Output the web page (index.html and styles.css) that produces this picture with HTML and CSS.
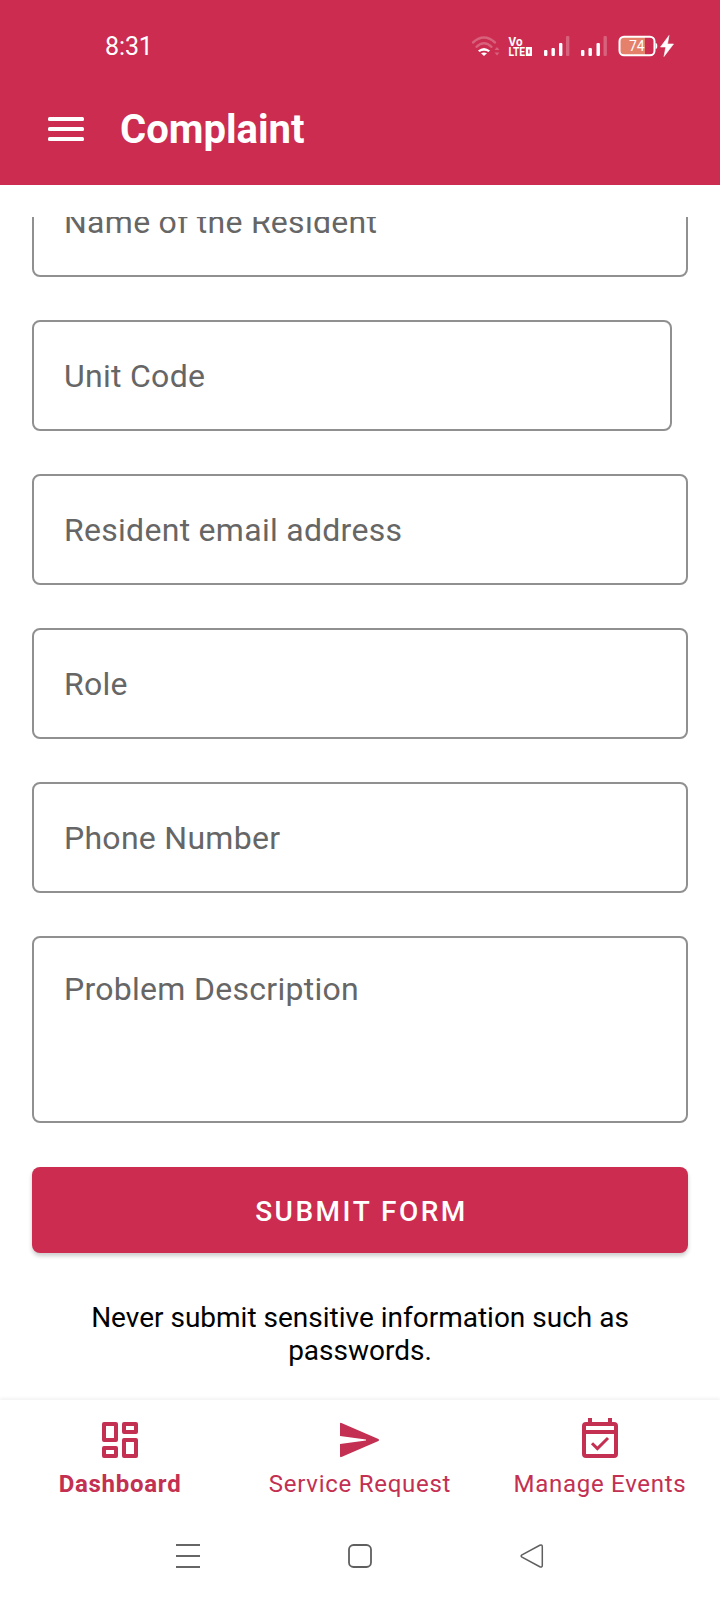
FILE: index.html
```
<!DOCTYPE html>
<html lang="en">
<head>
<meta charset="utf-8">
<title>Complaint</title>
<link rel="stylesheet" href="styles.css">
</head>
<body>
<div class="screen">
  <header class="header">
    <div class="status">
      <span class="clock">8:31</span>
      <svg class="status-icons" width="216" height="30" viewBox="470 30 216 30">
        <g fill="none" stroke="#fff" stroke-width="2.4" stroke-linecap="round">
          <path d="M473 42.5Q484 32.5 495 42.5" opacity=".25"/>
          <path d="M476.500 46.800Q484 39.800 491.500 46.800" opacity=".25"/>
        </g>
        <path d="M478 50.500Q484 45.500 490 50.500L488.500 52Q484 49.300 479.500 52z" fill="#fff"/>
        <path d="M481 53.300Q484 51.800 487 53.300L484 56z" fill="#fff"/>
        <path d="M494.500 50l2.500-3 2.500 3zM494.500 52.500l2.500 3 2.500-3z" fill="#fff" opacity=".25"/>
        <g class="volte" fill="#fff">
          <text x="508.500" y="45.500" textLength="14" lengthAdjust="spacingAndGlyphs">Vo</text>
          <text x="508.500" y="56" textLength="16.500" lengthAdjust="spacingAndGlyphs">LTE</text>
        </g>
        <path d="M527 48.200h3.800v6.600H527z" fill="none" stroke="#fff" stroke-width="2.400"/>
        <g fill="#fff">
          <rect x="544" y="50" width="3.400" height="6" rx="1"/>
          <rect x="551.500" y="48" width="3.400" height="8" rx="1"/>
          <rect x="559" y="43" width="3.400" height="13" rx="1"/>
          <rect x="566" y="36" width="3.400" height="20" rx="1" opacity=".25"/>
          <rect x="581" y="50" width="3.400" height="6" rx="1"/>
          <rect x="588.500" y="48" width="3.400" height="8" rx="1"/>
          <rect x="596.500" y="43" width="3.400" height="13" rx="1"/>
          <rect x="603.500" y="36" width="3.400" height="20" rx="1" opacity=".25"/>
        </g>
        <path d="M623 37h22v18h-22q-3 0-3-3V40q0-3 3-3z" fill="#e5806a"/>
        <rect x="619.500" y="36.700" width="35" height="18.600" rx="4.500" fill="none" stroke="#fff" stroke-width="2"/>
        <path d="M655.500 43q1.800 0 1.800 3t-1.800 3z" fill="#fff"/>
        <text class="battery" x="629" y="51" fill="#fff">74</text>
        <path d="M669 35.500l-8.500 11.500h5.300l-1.800 9.500 9.500-12.500h-6z" fill="#fff" stroke="#fff" stroke-width=".6"/>
      </svg>
    </div>
    <div class="toolbar">
      <svg width="36" height="26" viewBox="0 0 36 26" fill="#fff">
        <rect y="1" width="36" height="4" rx="1.500"/>
        <rect y="11" width="36" height="4" rx="1.500"/>
        <rect y="21" width="36" height="4" rx="1.500"/>
      </svg>
      <h1 class="title">Complaint</h1>
    </div>
  </header>

  <main class="content">
    <form class="form">
      <div class="field field-scrolled">Name of the Resident</div>
      <div class="field field-unit">Unit Code</div>
      <div class="field">Resident email address</div>
      <div class="field">Role</div>
      <div class="field">Phone Number</div>
      <div class="field field-area">Problem Description</div>
      <button class="submit" type="button">SUBMIT FORM</button>
    </form>
    <p class="note">Never submit sensitive information such as passwords.</p>
  </main>

  <nav class="tabs">
    <a class="tab tab-active">
      <svg width="48" height="48" viewBox="0 0 24 24" fill="none" stroke="currentColor" stroke-width="2" stroke-linejoin="round">
        <path d="M4 4h6v8H4zM14 4h6v4h-6zM14 12h6v8h-6zM4 16h6v4H4z"/>
      </svg>
      <span>Dashboard</span>
    </a>
    <a class="tab">
      <svg width="48" height="48" viewBox="0 0 24 24" fill="currentColor">
        <path d="M2 4Q2 3.200 2.700 3.500L21.200 11.500Q22 12 21.200 12.500L2.700 20.500Q2 20.800 2 20V14L15 12.200V11.800L2 10z"/>
      </svg>
      <span>Service Request</span>
    </a>
    <a class="tab">
      <svg width="48" height="48" viewBox="0 0 24 24" fill="none" stroke="currentColor" stroke-width="2">
        <rect x="4" y="4" width="16" height="16" rx="1"/>
        <path d="M7 1v3M17 1v3M4 8h16"/>
        <path d="M8 13.600l2.700 2.700 5.300-5.300" stroke-width="1.500"/>
      </svg>
      <span>Manage Events</span>
    </a>
  </nav>

  <div class="system">
    <svg width="24" height="24" viewBox="0 0 24 24" stroke="#666" stroke-width="2"><path d="M0 1h24M0 12h24M0 23h24"/></svg>
    <svg width="24" height="24" viewBox="0 0 24 24" fill="none" stroke="#5f5f5f" stroke-width="1.800"><rect x="1" y="1" width="22" height="22" rx="4.500"/></svg>
    <svg width="24" height="24" viewBox="0 0 24 24" fill="none" stroke="#5f5f5f" stroke-width="1.500"><path d="M2 10.800L19.800 1.300Q22.300 .3 22.300 2.800V21.200Q22.300 23.700 19.800 22.700L2 13.200Q.3 12 2 10.800z"/></svg>
  </div>
</div>
</body>
</html>
```
FILE: styles.css
```
* { box-sizing: border-box; }

body {
  margin: 0;
  background: #fff;
  font-family: Roboto, "Liberation Sans", sans-serif;
}

.screen {
  width: 720px;
  height: 1600px;
  display: flex;
  flex-direction: column;
  overflow: hidden;
}

.header {
  flex: none;
  height: 185px;
  background: #cb2c50;
  color: #fff;
}

.status {
  height: 73px;
  padding: 30px 34px 0 105px;
  display: flex;
  justify-content: space-between;
}

.clock {
  font-size: 25px;
  line-height: 33px;
  letter-spacing: -0.1px;
}

.volte {
  font-size: 12.5px;
  font-weight: 700;
}

.battery { font-size: 14px; }

.toolbar {
  height: 112px;
  padding-left: 48px;
  display: flex;
  align-items: center;
  gap: 36px;
}

.title {
  margin: 0;
  padding-top: 2px;
  font-size: 40px;
  line-height: 48px;
  font-weight: 700;
}

.content {
  flex: none;
  height: 1183px;
  margin-top: 32px;
  overflow: hidden;
}

.form {
  padding: 0 32px;
  display: flex;
  flex-direction: column;
  gap: 43px;
}

.field {
  height: 111px;
  padding-left: 30px;
  border: 2px solid #909090;
  border-radius: 8px;
  display: flex;
  align-items: center;
  font-size: 32px;
  letter-spacing: 0.28px;
  color: #666;
}

.field-scrolled { margin-top: -51px; }

.field-unit { margin-right: 16px; }

.field-area {
  height: 187px;
  padding-top: 32px;
  align-items: flex-start;
}

.submit {
  height: 86px;
  margin-top: 1px;
  padding: 2px 0 0 3px;
  border: 0;
  border-radius: 8px;
  background: #cb2c50;
  box-shadow: 0 3px 4px rgba(0, 0, 0, 0.2);
  color: #fff;
  font: 500 28px Roboto, sans-serif;
  letter-spacing: 2.5px;
}

.note {
  margin: 48px 64px 0;
  font-size: 28px;
  line-height: 33px;
  text-align: center;
  color: #000;
}

.tabs {
  flex: none;
  height: 112px;
  padding-top: 16px;
  display: grid;
  grid-template-columns: repeat(3, 240px);
  box-shadow: 0 -2px 3px rgba(0, 0, 0, 0.05);
}

.tab {
  display: flex;
  flex-direction: column;
  align-items: center;
  gap: 6px;
  color: #c33052;
  font-size: 24px;
  line-height: 28px;
  letter-spacing: 0.73px;
}

.tab-active {
  font-weight: 700;
}

.system {
  flex: 1;
  padding: 32px 176px 0;
  display: flex;
  justify-content: space-between;
  background: #fff;
}
```
